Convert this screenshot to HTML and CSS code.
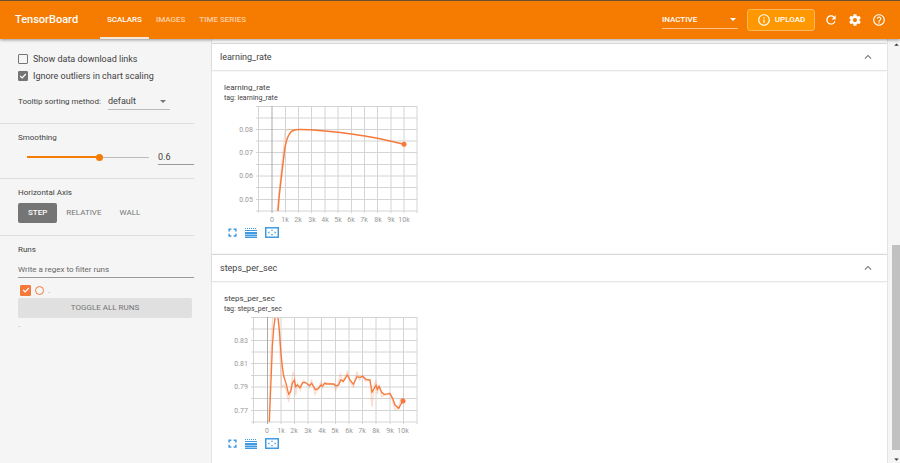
FILE: index.html
```html
<!DOCTYPE html>
<html lang="en">
    <head>
        <meta charset="utf-8">
        <title>TensorBoard</title>
        <link rel="stylesheet" href="styles.css">
    </head>
    <body>
        <svg class="defs" aria-hidden="true">
            <symbol id="icon-fit" viewBox="0 0 24 24">
                <path d="M3 9V3h6M15 3h6v6M21 15v6h-6M9 21H3v-6" fill="none" stroke="currentColor" stroke-width="4"/>
            </symbol>
            <symbol id="icon-lines" viewBox="0 0 12 10">
                <path d="M0 .5h12" stroke="currentColor" stroke-dasharray="1 1"/>
                <path d="M0 2.5h12M0 9.5h12" stroke="currentColor"/>
                <path d="M0 5h12M0 7.5h12" stroke="currentColor" stroke-width="2"/>
            </symbol>
            <symbol id="icon-domain" viewBox="0 0 14 11">
                <rect x=".75" y=".75" width="12.5" height="9.5" fill="none" stroke="currentColor" stroke-width="1.5"/>
                <path d="M5.8 3.8L7 2.2l1.2 1.6zM5.8 7.2L7 8.8l1.2-1.6zM4.4 4.3L2.8 5.5l1.6 1.2zM9.6 4.3l1.6 1.2-1.6 1.2z" fill="currentColor"/>
            </symbol>
            <symbol id="icon-up" viewBox="0 0 24 24">
                <path d="M12 8l-6 6 1.41 1.41L12 10.83l4.59 4.58L18 14z" fill="currentColor"/>
            </symbol>
        </svg>

        <header class="toolbar">
            <h1>TensorBoard</h1>
            <nav class="tabs">
                <a href="#scalars" class="active">SCALARS</a>
                <a href="#images">IMAGES</a>
                <a href="#timeseries">TIME SERIES</a>
            </nav>
            <select class="inactive-select" aria-label="Inactive dashboards">
                <option>INACTIVE</option>
            </select>
            <button class="upload">
                <svg viewBox="0 0 24 24"><path d="M11 7h2v2h-2zm0 4h2v6h-2zm1-9C6.48 2 2 6.48 2 12s4.48 10 10 10 10-4.48 10-10S17.52 2 12 2zm0 18c-4.41 0-8-3.59-8-8s3.59-8 8-8 8 3.59 8 8-3.59 8-8 8z"/></svg>
                UPLOAD
            </button>
            <div class="toolbar-icons">
                <button aria-label="Reload"><svg viewBox="0 0 24 24"><path d="M17.65 6.35C16.2 4.9 14.21 4 12 4c-4.42 0-7.99 3.58-7.99 8s3.57 8 7.99 8c3.73 0 6.84-2.55 7.73-6h-2.08c-.82 2.33-3.04 4-5.65 4-3.31 0-6-2.69-6-6s2.69-6 6-6c1.66 0 3.14.69 4.22 1.78L13 11h7V4l-2.35 2.35z"/></svg></button>
                <button aria-label="Settings"><svg viewBox="0 0 24 24"><path d="M19.43 12.98c.04-.32.07-.64.07-.98s-.03-.66-.07-.98l2.11-1.65c.19-.15.24-.42.12-.64l-2-3.46c-.12-.22-.39-.3-.61-.22l-2.49 1c-.52-.4-1.08-.73-1.69-.98l-.38-2.65C14.46 2.18 14.25 2 14 2h-4c-.25 0-.46.18-.49.42l-.38 2.65c-.61.25-1.17.59-1.69.98l-2.49-1c-.23-.09-.49 0-.61.22l-2 3.46c-.13.22-.07.49.12.64l2.11 1.65c-.04.32-.07.65-.07.98s.03.66.07.98l-2.11 1.65c-.19.15-.24.42-.12.64l2 3.46c.12.22.39.3.61.22l2.49-1c.52.4 1.08.73 1.69.98l.38 2.65c.03.24.24.42.49.42h4c.25 0 .46-.18.49-.42l.38-2.65c.61-.25 1.17-.59 1.69-.98l2.49 1c.23.09.49 0 .61-.22l2-3.46c.12-.22.07-.49-.12-.64l-2.11-1.65zM12 15.5c-1.93 0-3.5-1.57-3.5-3.5s1.57-3.5 3.5-3.5 3.5 1.57 3.5 3.5-1.57 3.5-3.5 3.5z"/></svg></button>
                <button aria-label="Help"><svg viewBox="0 0 24 24"><path d="M11 18h2v-2h-2v2zm1-16C6.48 2 2 6.48 2 12s4.48 10 10 10 10-4.48 10-10S17.52 2 12 2zm0 18c-4.41 0-8-3.59-8-8s3.59-8 8-8 8 3.59 8 8-3.59 8-8 8zm0-14c-2.21 0-4 1.79-4 4h2c0-1.1.9-2 2-2s2 .9 2 2c0 2-3 1.75-3 5h2c0-2.25 3-2.5 3-5 0-2.21-1.79-4-4-4z"/></svg></button>
            </div>
        </header>

        <div class="dashboard">
            <aside class="sidebar">
                <section class="options">
                    <label class="check"><input type="checkbox"> Show data download links</label>
                    <label class="check"><input type="checkbox" checked> Ignore outliers in chart scaling</label>
                    <div class="sorting">
                        <label for="sorting">Tooltip sorting method:</label>
                        <select id="sorting"><option>default</option></select>
                    </div>
                </section>
                <section class="smoothing">
                    <label for="smoothing" class="heading">Smoothing</label>
                    <div class="slider-row">
                        <input type="range" id="smoothing" min="0" max="1" step="0.1" value="0.6">
                        <input type="text" class="smoothing-value" aria-label="Smoothing value" value="0.6">
                    </div>
                </section>
                <section class="axis">
                    <div class="heading">Horizontal Axis</div>
                    <div class="axis-buttons">
                        <button class="selected">STEP</button>
                        <button>RELATIVE</button>
                        <button>WALL</button>
                    </div>
                </section>
                <section class="runs">
                    <label for="runs-regex" class="heading">Runs</label>
                    <input type="text" id="runs-regex" class="regex" placeholder="Write a regex to filter runs">
                    <div class="run">
                        <input type="checkbox" id="run" checked>
                        <span class="run-color"></span>
                        <label for="run">.</label>
                    </div>
                    <button class="toggle-all">TOGGLE ALL RUNS</button>
                    <div class="logdir">.</div>
                </section>
            </aside>

            <main>
                <section class="pane">
                    <div class="pane-header">
                        <h2>learning_rate</h2>
                        <button aria-label="Collapse learning_rate"><svg><use href="#icon-up"/></svg></button>
                    </div>
                    <div class="card">
                        <h3>learning_rate</h3>
                        <p>tag: learning_rate</p>
                        <svg class="chart" viewBox="0 0 200 122">
                            <path class="grid" d="M32 2.5H193M32 14H193M32 25.5H193M32 37H193M32 48.5H193M32 60.5H193M32 72H193M32 83.5H193M32 95.5H193M32 107H193"/>
                            <path class="grid" d="M34.5 2V109M61.5 2V109M74.5 2V109M87.5 2V109M101 2V109M114 2V109M127.5 2V109M140.5 2V109M153.5 2V109M167 2V109M180 2V109M193 2V109"/>
                            <path class="zero" d="M48 2V109"/>
                            <path class="raw" d="M53 107L61 27L66 25.5H80"/>
                            <path class="line" d="M54 107L55.3 91L58 67.7L60 51Q62 31 68.7 26.7Q71 25.6 76 25.6L86 25.8L101 27L114.3 28.3L127.3 30L140.7 32L153.7 34.3L166 37L180 40.3"/>
                            <circle class="dot" cx="180" cy="40.3" r="2.5"/>
                            <g class="y-labels">
                                <text x="29" y="28">0.08</text>
                                <text x="29" y="51">0.07</text>
                                <text x="29" y="74">0.06</text>
                                <text x="29" y="98">0.05</text>
                            </g>
                            <g class="x-labels">
                                <text x="48" y="118">0</text>
                                <text x="61" y="118">1k</text>
                                <text x="74" y="118">2k</text>
                                <text x="88" y="118">3k</text>
                                <text x="101" y="118">4k</text>
                                <text x="114" y="118">5k</text>
                                <text x="127" y="118">6k</text>
                                <text x="140" y="118">7k</text>
                                <text x="154" y="118">8k</text>
                                <text x="167" y="118">9k</text>
                                <text x="180" y="118">10k</text>
                            </g>
                        </svg>
                        <div class="chart-buttons">
                            <button aria-label="Toggle full size"><svg class="fit"><use href="#icon-fit"/></svg></button>
                            <button aria-label="Toggle y-axis log scale"><svg class="lines"><use href="#icon-lines"/></svg></button>
                            <button aria-label="Fit domain to data"><svg class="domain"><use href="#icon-domain"/></svg></button>
                        </div>
                    </div>
                </section>

                <section class="pane">
                    <div class="pane-header">
                        <h2>steps_per_sec</h2>
                        <button aria-label="Collapse steps_per_sec"><svg><use href="#icon-up"/></svg></button>
                    </div>
                    <div class="card">
                        <h3>steps_per_sec</h3>
                        <p>tag: steps_per_sec</p>
                        <svg class="chart" viewBox="0 0 200 122">
                            <path class="grid" d="M27 2.5H193M27 14H193M27 25.5H193M27 37H193M27 48.5H193M27 60.5H193M27 72H193M27 83.5H193M27 95.5H193M27 107H193"/>
                            <path class="grid" d="M29.5 2V109M57 2V109M70.5 2V109M84 2V109M97.5 2V109M111.5 2V109M125 2V109M138.5 2V109M152 2V109M166 2V109M179.5 2V109M193 2V109"/>
                            <path class="zero" d="M43.5 2V109"/>
                            <!-- curves are kept in thirds of a pixel -->
                            <g transform="translate(-14 -65) scale(.33333)">
                                <path class="raw thirds" d="M177 516L182 330L188 204M206 204L211 330L215 412L223 405L230 425L236 456L243 410L249 368L254 380L257 436L263 400L271 420L280 392L291 400L299 412L304 388L310 412L315 433L325 415L333 395L338 412L345 397L372 403L378 420L386 396L391 373L399 396L412 364L420 395L430 412L441 365L448 390L458 376L466 394L480 388L486 470L493 405L498 390L502 432L508 405L515 440L540 428L548 455L555 479L566 474L572 448L580 443"/>
                                <path class="line thirds" d="M178 516L181 440L184 370L187 290L191 235L195 204M204 204L208 240L213 310L217 350L221 378L228 400L236 433L242 425L247 400L253 390L257 410L262 405L270 413L278 398L285 397L292 402L299 407L305 400L310 408L316 419L325 416L333 405L337 408L344 400L350 402L372 402L378 408L386 405L392 390L400 394L412 375L420 390L430 403L441 380L450 382L458 379L468 388L480 390L486 426L498 406L502 418L507 409L515 427L522 433L540 431L548 445L555 465L566 475L573 462L580 453"/>
                            </g>
                            <circle class="dot" cx="179" cy="86" r="2.5"/>
                            <g class="y-labels">
                                <text x="24" y="28">0.83</text>
                                <text x="24" y="51">0.81</text>
                                <text x="24" y="74">0.79</text>
                                <text x="24" y="98">0.77</text>
                            </g>
                            <g class="x-labels">
                                <text x="43" y="118">0</text>
                                <text x="57" y="118">1k</text>
                                <text x="70" y="118">2k</text>
                                <text x="84" y="118">3k</text>
                                <text x="98" y="118">4k</text>
                                <text x="111" y="118">5k</text>
                                <text x="125" y="118">6k</text>
                                <text x="138" y="118">7k</text>
                                <text x="152" y="118">8k</text>
                                <text x="166" y="118">9k</text>
                                <text x="179" y="118">10k</text>
                            </g>
                        </svg>
                        <div class="chart-buttons">
                            <button aria-label="Toggle full size"><svg class="fit"><use href="#icon-fit"/></svg></button>
                            <button aria-label="Toggle y-axis log scale"><svg class="lines"><use href="#icon-lines"/></svg></button>
                            <button aria-label="Fit domain to data"><svg class="domain"><use href="#icon-domain"/></svg></button>
                        </div>
                    </div>
                </section>
            </main>

            <div class="scrollbar" aria-hidden="true">
                <svg viewBox="0 0 6 4"><path d="M0 3.5L3 .5l3 3z"/></svg>
                <div class="thumb"></div>
                <svg viewBox="0 0 6 4"><path d="M0 .5L3 3.5l3-3z"/></svg>
            </div>
        </div>
    </body>
</html>
```

FILE: styles.css
```css
:root {
    --primary: #f57c00;
    --upload: #ff9800;
    --run-color: #f4793b;
    --sidebar: #f5f5f5;
    --text: #424242;
    --text-light: #757575;
    --border: #ddd;
    --action: #409be0;
}

* {
    box-sizing: border-box;
}

body {
    margin: 0;
    height: 100vh;
    display: flex;
    flex-direction: column;
    overflow: hidden;
    font-family: Roboto, sans-serif;
    font-size: 9px;
    line-height: 12px;
    color: var(--text);
}

h1, h2, h3, p {
    margin: 0;
    font-weight: 400;
}

button, input, select {
    margin: 0;
    padding: 0;
    border: 0;
    border-radius: 0;
    outline: 0;
    background: none;
    color: inherit;
    font: inherit;
    appearance: none;
}

svg {
    display: block;
}

.defs {
    display: none;
}

/* toolbar */
.toolbar {
    flex: none;
    display: flex;
    align-items: center;
    height: 39px;
    padding: 0 14px 0 15px;
    border-top: 1px solid #69502f;
    background: var(--primary);
    color: white;
    box-shadow: 0 1px 3px rgba(0, 0, 0, 0.4);
    z-index: 1;
}

.toolbar h1 {
    width: 85px;
    font-size: 11px;
    font-weight: 500;
}

.tabs {
    display: flex;
    align-self: stretch;
    flex: 1;
}

.tabs a {
    display: flex;
    align-items: center;
    padding: 2px 7px 0;
    border-bottom: 2px solid transparent;
    color: rgba(255, 255, 255, 0.65);
    font-size: 8px;
    font-weight: 500;
    text-decoration: none;
}

.tabs a.active {
    color: white;
    border-color: #f5e6d8;
}

.inactive-select {
    width: 76px;
    height: 17px;
    margin-right: 9px;
    border-bottom: 1px solid #fbc38a;
    font-size: 8px;
    font-weight: 500;
    background: url("data:image/svg+xml,%3Csvg xmlns='http://www.w3.org/2000/svg' viewBox='0 0 6 3'%3E%3Cpath d='M0 0h6L3 3z' fill='white'/%3E%3C/svg%3E") no-repeat right 2px center / 6px 3px;
}

.upload {
    display: flex;
    align-items: center;
    justify-content: center;
    gap: 4px;
    width: 68px;
    height: 22px;
    margin-right: 9px;
    border: 1px solid #fbb75c;
    border-radius: 3px;
    background: var(--upload);
    font-size: 8px;
    font-weight: 500;
}

.toolbar svg {
    width: 14px;
    height: 14px;
    fill: currentColor;
}

.toolbar-icons {
    display: flex;
    gap: 10px;
}

/* layout */
.dashboard {
    flex: 1;
    display: flex;
    min-height: 0;
    background: var(--sidebar);
}

.sidebar {
    flex: none;
    width: 211px;
    padding-right: 17px;
}

.sidebar section {
    padding-left: 18px;
    border-bottom: 1px solid var(--border);
}

.sidebar .runs {
    border: 0;
}

.heading {
    display: block;
    font-size: 8px;
}

.options {
    height: 85px;
    padding-top: 11px;
}

.check {
    display: flex;
    align-items: center;
    gap: 5px;
    height: 17px;
}

input[type="checkbox"] {
    width: 10px;
    height: 10px;
    border: 1px solid var(--text-light);
    border-radius: 1px;
}

input[type="checkbox"]:checked {
    background: var(--text-light) url("data:image/svg+xml,%3Csvg xmlns='http://www.w3.org/2000/svg' viewBox='0 0 10 10'%3E%3Cpath d='M1.5 5l2.5 2.5 4.5-5' fill='none' stroke='white' stroke-width='1.5'/%3E%3C/svg%3E") center / 8px no-repeat;
}

.sorting {
    display: flex;
    align-items: center;
    gap: 5px;
    margin-top: 9px;
}

.sorting label {
    width: 85px;
    font-size: 8px;
    white-space: nowrap;
}

.sorting select {
    width: 62px;
    height: 17px;
    border-bottom: 1px solid #bbb;
    background: url("data:image/svg+xml,%3Csvg xmlns='http://www.w3.org/2000/svg' viewBox='0 0 6 3'%3E%3Cpath d='M0 0h6L3 3z' fill='%23757575'/%3E%3C/svg%3E") no-repeat right 4px center / 6px 3px;
}

.smoothing {
    height: 55px;
    padding-top: 8px;
}

.slider-row {
    display: flex;
    align-items: center;
    gap: 6px;
    padding-left: 5px;
    margin-top: 5px;
}

input[type="range"] {
    flex: 1;
    min-width: 0;
    height: 8px;
}

input[type="range"]::-webkit-slider-runnable-track {
    height: 7px;
    background:
        linear-gradient(var(--primary), var(--primary)) 4px center / 58% 2px no-repeat,
        linear-gradient(#bbb, #bbb) center / calc(100% - 7px) 1px no-repeat;
}

input[type="range"]::-webkit-slider-thumb {
    appearance: none;
    width: 7px;
    height: 7px;
    border-radius: 50%;
    background: var(--primary);
}

.smoothing-value {
    width: 36px;
    height: 16px;
    border-bottom: 1px solid #999;
}

.axis {
    height: 57px;
    padding-top: 8px;
}

.axis-buttons {
    display: flex;
    margin-top: 4px;
}

.axis-buttons button {
    height: 20px;
    padding: 0 9px;
    border-radius: 2px;
    color: var(--text-light);
    font-size: 8px;
}

.axis-buttons .selected {
    padding: 0 10px;
    background: var(--text-light);
    color: white;
    font-weight: 500;
}

.runs {
    padding-top: 8px;
}

.regex {
    width: 100%;
    height: 17px;
    margin-top: 5px;
    border-bottom: 1px solid #999;
    font-size: 8px;
}

.regex::placeholder {
    color: #666;
}

.run {
    display: flex;
    align-items: center;
    gap: 4px;
    height: 16px;
    margin-top: 4px;
    padding-left: 2px;
}

.run input[type="checkbox"] {
    width: 11px;
    height: 11px;
    border-color: var(--run-color);
    background-color: var(--run-color);
}

.run-color {
    width: 9px;
    height: 9px;
    border: 1px solid var(--run-color);
    border-radius: 50%;
}

.toggle-all {
    width: calc(100% - 2px);
    height: 20px;
    border-radius: 2px;
    background: #e0e0e0;
    color: var(--text-light);
    font-size: 8px;
}

.run label, .logdir {
    color: #999;
}

/* panes */
main {
    flex: 1;
    min-width: 0;
    padding-top: 4px;
    background: white;
    border-left: 1px solid #e4e4e4;
}

.pane {
    height: 211px;
}

.pane-header {
    display: flex;
    align-items: center;
    justify-content: space-between;
    height: 28px;
    padding: 0 12px 0 8px;
    border-top: 1px solid #d8d8d8;
    border-bottom: 1px solid #e6e6e6;
    box-shadow: 0 0 2px rgba(0, 0, 0, 0.1);
}

.pane-header h2 {
    font-size: 9px;
}

.pane-header svg {
    width: 14px;
    height: 14px;
    color: #777;
}

.card {
    padding: 11px 12px;
}

.card h3 {
    font-size: 8px;
}

.card p {
    font-size: 7px;
    line-height: 8px;
}

.chart {
    width: 200px;
    height: 122px;
    margin-top: 2px;
}

.grid, .zero, .raw, .line {
    fill: none;
}

.grid {
    stroke: #d4d4d4;
}

.zero {
    stroke: #aaa;
}

.raw {
    stroke: var(--run-color);
    stroke-opacity: 0.25;
}

.line {
    stroke: var(--run-color);
    stroke-width: 1.5px;
}

.raw.thirds {
    stroke-width: 4px;
}

.line.thirds {
    stroke-width: 4px;
}

.dot {
    fill: var(--run-color);
}

.chart text {
    font-size: 7px;
    fill: #999;
}

.y-labels {
    text-anchor: end;
}

.x-labels {
    text-anchor: middle;
}

.chart-buttons {
    display: flex;
    align-items: center;
    gap: 8px;
    height: 13px;
    padding-left: 4px;
    color: var(--action);
}

.fit {
    width: 9px;
    height: 9px;
}

.lines {
    width: 12px;
    height: 10px;
}

.domain {
    width: 14px;
    height: 11px;
}

/* scrollbar column */
.scrollbar {
    flex: none;
    display: flex;
    flex-direction: column;
    align-items: center;
    width: 13px;
    padding: 4px 0 2px 4px;
    border-left: 1px solid #e4e4e4;
}

.scrollbar svg {
    width: 5px;
    height: 3px;
    fill: #333;
}

.thumb {
    width: 8px;
    height: 205px;
    margin-top: auto;
    margin-bottom: 8px;
    background: #c1c1c1;
}
```
